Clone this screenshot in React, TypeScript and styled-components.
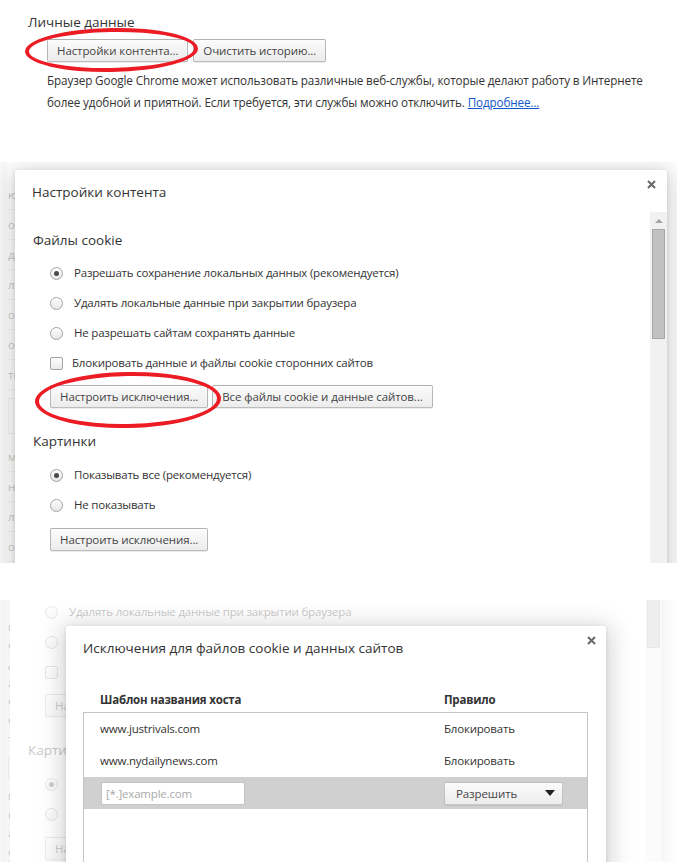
import styled, { createGlobalStyle } from 'styled-components';

const GlobalStyle = createGlobalStyle`
  html, body {
    margin: 0;
    padding: 0;
    background: #fff;
  }
  body {
    font-family: "Open Sans", "Noto Sans", Arial, sans-serif;
    color: #333;
  }
`;

const UI_FONT = `"Open Sans", "Noto Sans", Arial, sans-serif`;

const Page = styled.div`
  width: 677px;
  height: 862px;
  overflow: hidden;
  display: flex;
  flex-direction: column;
`;

const Shot = styled.section<{ $height: number }>`
  position: relative;
  flex: none;
  height: ${(p) => p.$height}px;
  overflow: hidden;
  background: #fff;
`;

const Gap = styled.div<{ $height: number }>`
  flex: none;
  height: ${(p) => p.$height}px;
`;

/* ---------- shared controls ---------- */

const Button = styled.button`
  flex: none;
  height: 23px;
  padding: 0 9px;
  box-sizing: border-box;
  border: 1px solid rgba(0, 0, 0, 0.25);
  border-radius: 2px;
  background: linear-gradient(#fbfbfb, #ececec);
  box-shadow: 0 1px 0 rgba(0, 0, 0, 0.08), inset 0 1px 2px rgba(255, 255, 255, 0.75);
  color: #444;
  font: 11.5px/21px ${UI_FONT};
  letter-spacing: -0.1px;
  white-space: nowrap;
  cursor: default;
`;

const Circled = styled.span<{ $t: number; $r: number; $b: number; $l: number }>`
  position: relative;
  display: inline-flex;

  &::after {
    content: '';
    position: absolute;
    top: ${(p) => -p.$t}px;
    right: ${(p) => -p.$r}px;
    bottom: ${(p) => -p.$b}px;
    left: ${(p) => -p.$l}px;
    border: 4px solid #ec1c24;
    border-radius: 50%;
    transform: rotate(-1deg);
    pointer-events: none;
    z-index: 3;
  }
`;

const Radio = styled.span<{ $checked?: boolean }>`
  position: relative;
  flex: none;
  width: 13px;
  height: 13px;
  box-sizing: border-box;
  border: 1px solid #a2a2a2;
  border-radius: 50%;
  background: linear-gradient(#fdfdfd, #e7e7e7);
  box-shadow: inset 0 1px 1px rgba(255, 255, 255, 0.8);

  &::after {
    content: '';
    display: ${(p) => (p.$checked ? 'block' : 'none')};
    position: absolute;
    left: 3px;
    top: 3px;
    width: 5px;
    height: 5px;
    border-radius: 50%;
    background: #4a4a4a;
  }
`;

const Checkbox = styled.span`
  flex: none;
  width: 13px;
  height: 13px;
  box-sizing: border-box;
  border: 1px solid #a2a2a2;
  border-radius: 2px;
  background: linear-gradient(#fdfdfd, #eaeaea);
`;

const CloseButton = styled.span<{ $top: number; $right: number }>`
  position: absolute;
  top: ${(p) => p.$top}px;
  right: ${(p) => p.$right}px;
  display: flex;
`;

function CloseIcon() {
  return (
    <svg width="9" height="9" viewBox="0 0 9 9">
      <path d="M1 1 L8 8 M8 1 L1 8" stroke="#6a6a6a" strokeWidth="2" strokeLinecap="butt" />
    </svg>
  );
}

/* ---------- first shot: privacy section ---------- */

const PrivacySection = styled.div`
  padding: 12px 0 0 28px;
`;

const SectionTitle = styled.h3`
  margin: 0;
  font: 400 13.5px/20px ${UI_FONT};
  color: #333;
`;

const SectionBody = styled.div`
  padding: 7px 0 0 19px;
`;

const ButtonRow = styled.div<{ $gap: number }>`
  display: flex;
  gap: ${(p) => p.$gap}px;
`;

const Note = styled.p`
  margin: 7px 0 0;
  font: 11.7px/22px ${UI_FONT};
  letter-spacing: -0.12px;
  color: #333;
  white-space: nowrap;
`;

const MoreLink = styled.a`
  color: #1155cc;
  text-decoration: underline;
`;

/* ---------- settings page under the dialogs ---------- */

const Backdrop = styled.div<{ $width: number }>`
  position: absolute;
  left: 0;
  top: 0;
  bottom: 0;
  width: ${(p) => p.$width}px;
  overflow: hidden;
  display: flex;
  background: #fff;
`;

const Gutter = styled.div`
  flex: none;
  width: 7px;
  background: #ececec;
`;

const PageColumn = styled.div`
  flex: 1;
  min-width: 0;
  display: flex;
  flex-direction: column;
  padding: 18px 0 0 1px;
  font: 11.5px/20px ${UI_FONT};
  color: #333;
`;

const PageRow = styled.div<{ $boxed?: boolean }>`
  height: ${(p) => (p.$boxed ? 34 : 29)}px;
  display: flex;
  align-items: center;
  border-bottom: 1px solid #d6d6d6;
  ${(p) => (p.$boxed ? 'border: 1px solid #d0d0d0; margin: 8px 0;' : '')}
  white-space: nowrap;
  overflow: hidden;
`;

const Scrim = styled.div<{ $alpha: number }>`
  position: absolute;
  inset: 0;
  background: rgba(255, 255, 255, ${(p) => p.$alpha});
`;

const pageRows = ['ю', 'о', 'да', 'ля', 'о', 'ог', 'те'];
const lowerRows = ['м', 'нс', 'лу', 'ог'];

function SettingsBackdrop({ width }: { width: number }) {
  return (
    <Backdrop $width={width}>
      <Gutter />
      <PageColumn>
        {pageRows.map((text, i) => (
          <PageRow key={i}>{text}</PageRow>
        ))}
        <PageRow $boxed />
        {lowerRows.map((text, i) => (
          <PageRow key={`l${i}`}>{text}</PageRow>
        ))}
      </PageColumn>
    </Backdrop>
  );
}

/* ---------- dialogs ---------- */

const Dialog = styled.div<{ $left: number; $top: number; $width: number }>`
  position: absolute;
  left: ${(p) => p.$left}px;
  top: ${(p) => p.$top}px;
  width: ${(p) => p.$width}px;
  height: 720px;
  display: flex;
  flex-direction: column;
  background: #fff;
  border-radius: 2px;
  box-shadow: 0 4px 24px 4px rgba(0, 0, 0, 0.18), 0 1px 4px rgba(0, 0, 0, 0.12);
`;

const DialogHeader = styled.div`
  position: relative;
  flex: none;
  height: 42px;
  box-sizing: border-box;
  padding: 12px 0 0 17px;
  font: 400 13.5px/20px ${UI_FONT};
  color: #333;
`;

const DialogBody = styled.div`
  flex: 1;
  display: flex;
  min-height: 0;
`;

const ScrollContent = styled.div`
  flex: 1;
  padding: 18px 0 0 18px;
`;

const Heading = styled.div<{ $space?: number }>`
  margin-top: ${(p) => p.$space ?? 0}px;
  font: 400 13.5px/20px ${UI_FONT};
  color: #333;
`;

const OptionList = styled.div<{ $space: number }>`
  margin-top: ${(p) => p.$space}px;
  padding-left: 17px;
  display: flex;
  flex-direction: column;
`;

const Option = styled.label<{ $gap: number }>`
  height: 30px;
  display: flex;
  align-items: center;
  gap: ${(p) => p.$gap}px;
  font: 11.5px/20px ${UI_FONT};
  letter-spacing: -0.2px;
  color: #333;
  white-space: nowrap;
`;

const ActionRow = styled.div<{ $space: number }>`
  margin-top: ${(p) => p.$space}px;
  padding-left: 17px;
  display: flex;
  gap: 4px;
`;

const Scrollbar = styled.div`
  flex: none;
  width: 17px;
  display: flex;
  flex-direction: column;
  align-items: center;
  background: #f1f1f1;
`;

const ScrollArrow = styled.span`
  flex: none;
  width: 0;
  height: 0;
  margin: 7px 0 6px;
  border-left: 4px solid transparent;
  border-right: 4px solid transparent;
  border-bottom: 4px solid #a3a3a3;
`;

const ScrollThumb = styled.span<{ $height: number }>`
  flex: none;
  width: 13px;
  height: ${(p) => p.$height}px;
  box-sizing: border-box;
  border: 1px solid #a8a8a8;
  background: #c1c1c1;
`;

interface ContentDialogProps {
  left: number;
  top: number;
  circled?: boolean;
}

function ContentSettingsDialog({ left, top, circled }: ContentDialogProps) {
  const exceptions = <Button>Настроить исключения...</Button>;

  return (
    <Dialog $left={left} $top={top} $width={652}>
      <DialogHeader>
        Настройки контента
        <CloseButton $top={10} $right={11}>
          <CloseIcon />
        </CloseButton>
      </DialogHeader>
      <DialogBody>
        <ScrollContent>
          <Heading>Файлы cookie</Heading>
          <OptionList $space={8}>
            <Option $gap={11}>
              <Radio $checked />
              Разрешать сохранение локальных данных (рекомендуется)
            </Option>
            <Option $gap={11}>
              <Radio />
              Удалять локальные данные при закрытии браузера
            </Option>
            <Option $gap={11}>
              <Radio />
              Не разрешать сайтам сохранять данные
            </Option>
            <Option $gap={9}>
              <Checkbox />
              Блокировать данные и файлы cookie сторонних сайтов
            </Option>
          </OptionList>
          <ActionRow $space={7}>
            {circled ? (
              <Circled $t={13} $r={13} $b={20} $l={15}>
                {exceptions}
              </Circled>
            ) : (
              exceptions
            )}
            <Button>Все файлы cookie и данные сайтов...</Button>
          </ActionRow>

          <Heading $space={23}>Картинки</Heading>
          <OptionList $space={9}>
            <Option $gap={11}>
              <Radio $checked />
              Показывать все (рекомендуется)
            </Option>
            <Option $gap={11}>
              <Radio />
              Не показывать
            </Option>
          </OptionList>
          <ActionRow $space={8}>
            <Button>Настроить исключения...</Button>
          </ActionRow>
        </ScrollContent>
        <Scrollbar>
          <ScrollArrow />
          <ScrollThumb $height={110} />
        </Scrollbar>
      </DialogBody>
    </Dialog>
  );
}

/* ---------- exceptions dialog ---------- */

const ExceptionsBody = styled.div`
  padding: 22px 18px 0 17px;
`;

const Columns = styled.div`
  display: grid;
  grid-template-columns: 344px 1fr;
  align-items: center;
`;

const ColumnHeads = styled(Columns)`
  height: 20px;
  padding-left: 17px;
  font: 700 11.5px/20px ${UI_FONT};
  letter-spacing: -0.2px;
  color: #333;
`;

const ExceptionList = styled.div`
  margin-top: 2px;
  height: 300px;
  border: 1px solid #c4c4c4;
`;

const ExceptionRow = styled(Columns)<{ $selected?: boolean }>`
  height: 32px;
  padding-left: 16px;
  background: ${(p) => (p.$selected ? '#d0d0d0' : 'transparent')};
  font: 11.5px/20px ${UI_FONT};
  letter-spacing: -0.2px;
  color: #333;
`;

const PatternInput = styled.input`
  width: 144px;
  height: 23px;
  margin-left: 1px;
  box-sizing: border-box;
  padding: 0 4px;
  border: 1px solid #c4c4c4;
  border-radius: 2px;
  background: #fff;
  font: 11.5px ${UI_FONT};
  letter-spacing: -0.2px;
  color: #333;
  outline: none;

  &::placeholder {
    color: #a9a9a9;
  }
`;

const RuleSelect = styled.div`
  width: 119px;
  height: 23px;
  box-sizing: border-box;
  display: flex;
  align-items: center;
  justify-content: space-between;
  padding: 0 7px 0 11px;
  border: 1px solid rgba(0, 0, 0, 0.2);
  border-radius: 2px;
  background: linear-gradient(#fbfbfb, #ececec);
  box-shadow: 0 1px 0 rgba(0, 0, 0, 0.08);
  font: 11.5px/21px ${UI_FONT};
  letter-spacing: -0.1px;
  color: #444;
`;

const SelectArrow = styled.span`
  width: 0;
  height: 0;
  border-left: 5px solid transparent;
  border-right: 5px solid transparent;
  border-top: 6px solid #222;
`;

const exceptionRules = [
  { host: 'www.justrivals.com', rule: 'Блокировать' },
  { host: 'www.nydailynews.com', rule: 'Блокировать' },
];

function CookieExceptionsDialog() {
  return (
    <Dialog $left={66} $top={26} $width={540}>
      <DialogHeader>
        Исключения для файлов cookie и данных сайтов
        <CloseButton $top={10} $right={10}>
          <CloseIcon />
        </CloseButton>
      </DialogHeader>
      <ExceptionsBody>
        <ColumnHeads>
          <span>Шаблон названия хоста</span>
          <span>Правило</span>
        </ColumnHeads>
        <ExceptionList>
          {exceptionRules.map((r) => (
            <ExceptionRow key={r.host}>
              <span>{r.host}</span>
              <span>{r.rule}</span>
            </ExceptionRow>
          ))}
          <ExceptionRow $selected>
            <PatternInput placeholder="[*.]example.com" />
            <RuleSelect>
              Разрешить
              <SelectArrow />
            </RuleSelect>
          </ExceptionRow>
        </ExceptionList>
      </ExceptionsBody>
    </Dialog>
  );
}

export default function App() {
  return (
    <Page>
      <GlobalStyle />

      <Shot $height={162}>
        <PrivacySection>
          <SectionTitle>Личные данные</SectionTitle>
          <SectionBody>
            <ButtonRow $gap={5}>
              <Circled $t={11} $r={10} $b={10} $l={22}>
                <Button>Настройки контента...</Button>
              </Circled>
              <Button>Очистить историю...</Button>
            </ButtonRow>
            <Note>
              Браузер Google Chrome может использовать различные веб-службы, которые делают работу в Интернете
              <br />
              более удобной и приятной. Если требуется, эти службы можно отключить.{' '}
              <MoreLink href="#">Подробнее...</MoreLink>
            </Note>
          </SectionBody>
        </PrivacySection>
      </Shot>

      <Shot $height={401}>
        <SettingsBackdrop width={16} />
        <Scrim $alpha={0.72} />
        <ContentSettingsDialog left={15} top={8} circled />
      </Shot>

      <Gap $height={37} />

      <Shot $height={262}>
        <SettingsBackdrop width={11} />
        <ContentSettingsDialog left={10} top={-121} />
        <Scrim $alpha={0.73} />
        <CookieExceptionsDialog />
      </Shot>
    </Page>
  );
}
